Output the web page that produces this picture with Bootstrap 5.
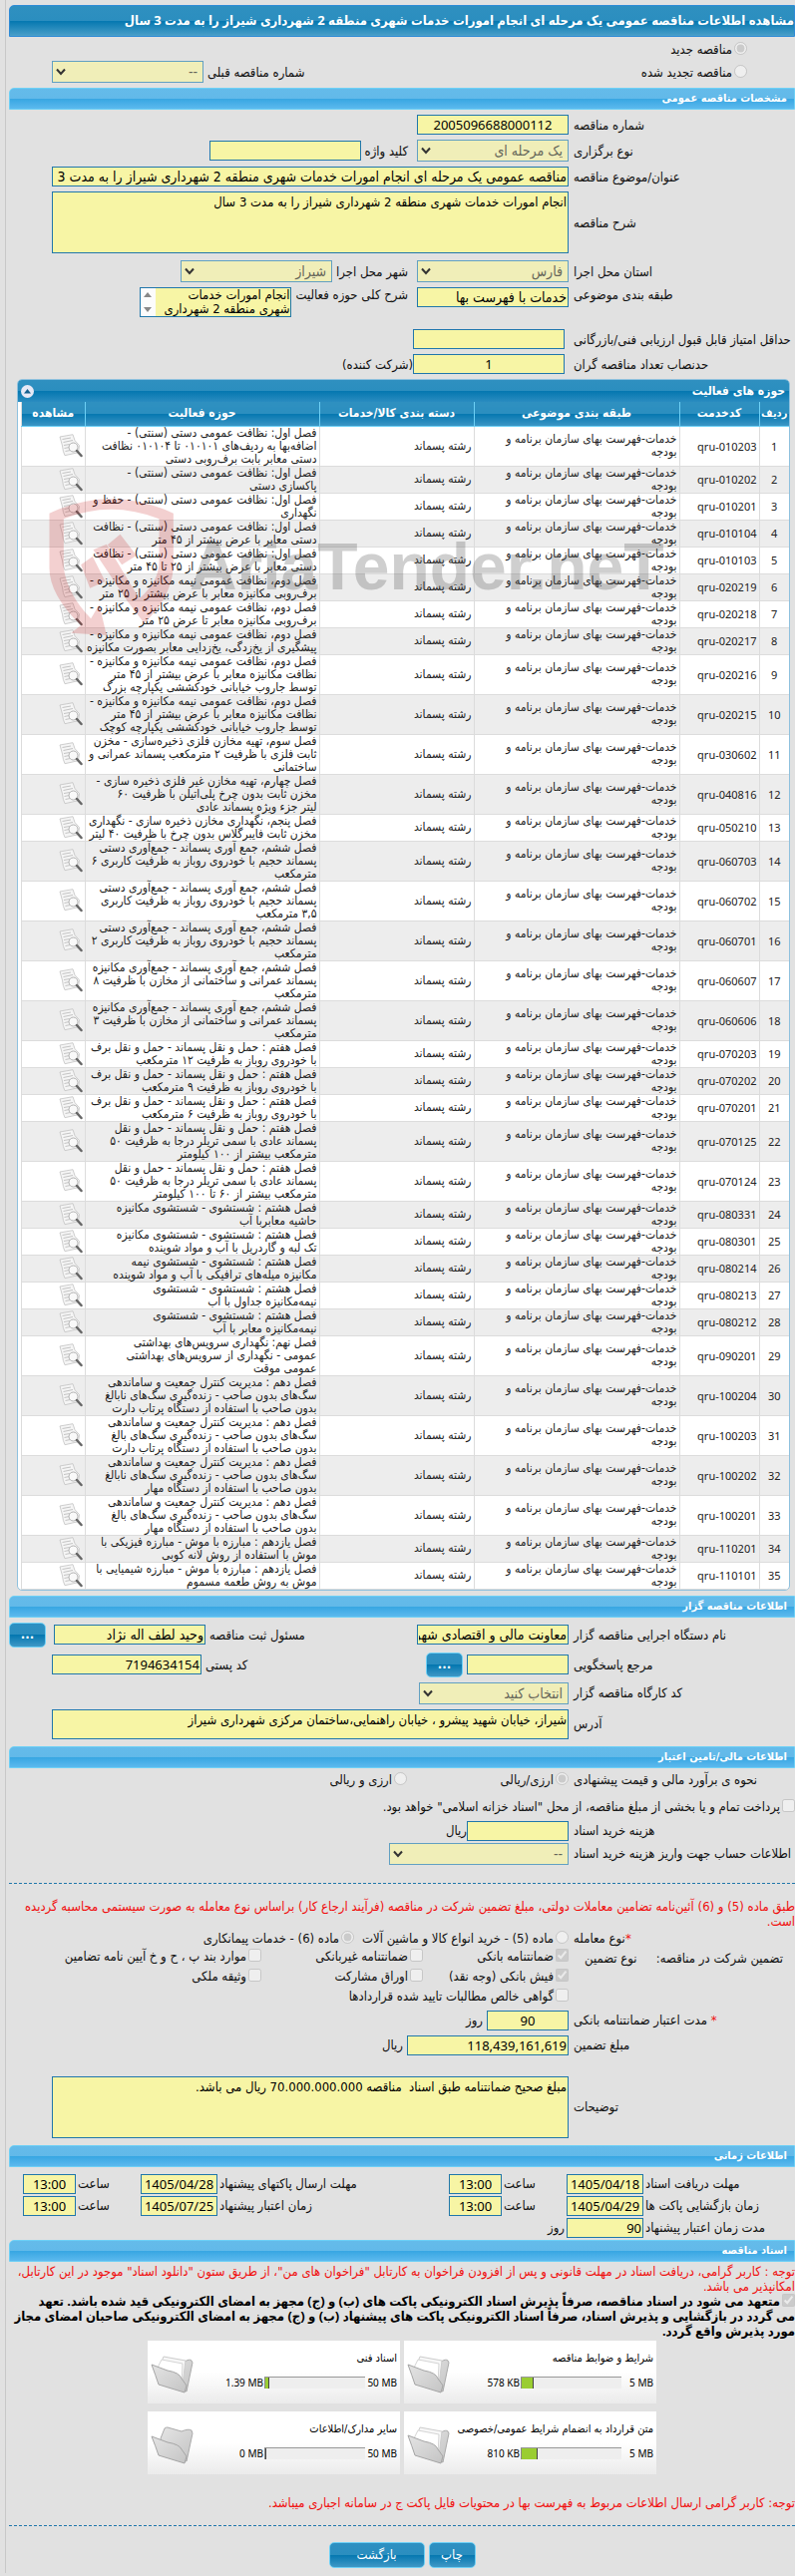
<!DOCTYPE html>
<html lang="fa" dir="rtl">
<head>
<meta charset="utf-8">
<meta name="viewport" content="width=device-width, initial-scale=1">
<title>مشاهده اطلاعات مناقصه عمومی</title>
<link href="https://cdn.jsdelivr.net/npm/bootstrap@5.3.0/dist/css/bootstrap.min.css" rel="stylesheet">
<style>
body{background:#e1e1e1;color:#111;font:13px/15px "DejaVu Sans Condensed","DejaVu Sans",sans-serif;overflow-x:hidden}
.page-frame{margin-left:5px;border-left:1px solid #c8c8c8;padding:5px 0 5px 3px}
.s2{margin-top:2px}.s5{margin-top:5px}.s7{margin-top:7px}.s12{margin-top:12px}.s15{margin-top:15px}.s18{margin-top:18px}.s21{margin-top:21px}
.title-bar{height:32px;border:1px solid #2e8bd6;border-radius:5px 0 0 0;color:#fff;font-family:"Noto Sans","DejaVu Sans Condensed","DejaVu Sans",sans-serif;font-size:13px;font-weight:700;white-space:nowrap;
 background:linear-gradient(#2f90c0 0,#2b8ebf 50%,#0477b0 50%,#4a9fc9 100%)}
.section-bar{height:22px;border:1px solid #6dd0f6;border-radius:5px 0 0 0;color:#fff;font-size:11px;font-weight:700;padding-right:7px;margin-bottom:0;
 background:linear-gradient(#64bbea 0,#62b9e9 50%,#37a6e2 50%,#5cb9ee 100%)}
.lab{flex:0 0 227px;padding-left:5px;text-align:left;white-space:nowrap}
.lab2{padding-left:4px;padding-right:9px;text-align:left;white-space:nowrap}
.h22{min-height:22px}.h20{min-height:20px}.h24{min-height:24px}.h26{min-height:25px}
.fld{display:block;height:20px;border:1px solid #2077ab;border-radius:0;background:#f7f5a5;color:#000;font-size:14px;line-height:18px;padding:0 1px;min-width:0;outline:0}
.digits{font-family:"Noto Sans","DejaVu Sans Condensed",sans-serif;font-size:13px}
textarea.fld{font-size:13px;line-height:15px;padding:2px 1px 0;resize:none;overflow:hidden}
select.fld{height:22px;appearance:none;background:#f0eeb8 url("data:image/svg+xml,%3Csvg xmlns='http://www.w3.org/2000/svg' width='10' height='8'%3E%3Cpath d='M1 1.5l4 4.5 4-4.5' fill='none' stroke='%23333' stroke-width='2'/%3E%3C/svg%3E") no-repeat 3px 6px;border-color:#62a0c2;color:#66665a;padding:0 5px 0 16px;opacity:1}
.w152{width:152px}.w150{width:150px}.w180{width:180px}.w102{width:102px}.w82{width:82px}.w162{width:162px}
.wide{flex:1 1 0}
.pl43{padding-left:43px}
input[type=radio],input[type=checkbox]{width:13px;height:13px;margin:0 0 0 2px;flex:none;vertical-align:-1px}
.btn-blue{border:1px solid #6dd0f6;border-radius:5px;color:#fff;font-size:13px;line-height:14px;padding:0;height:26px;
 background:linear-gradient(#2d90c2 0,#2b8ebf 50%,#0477b0 50%,#3f98c6 100%)}
.btn-blue:hover{color:#fff}
.btn-dots{width:37px;font-weight:700;height:25px}
.warn{color:#f01010}
.dash{border-top:1px dashed #2077ab}
.grid-panel{margin:5px 5px 0 8px;border:1px solid #8fc1de;border-radius:5px;background:#fff;padding-left:3px;overflow:hidden;color:#222}
.grid-head{height:22px;margin-left:-3px;padding:0 4px 0 3px;color:#fff;font-size:12px;font-weight:700;
 background:linear-gradient(#2f90c0 0,#2b8ebf 50%,#0477b0 50%,#2a8cc0 100%)}
.round-btn{width:13px;height:13px;border:0;border-radius:50%;background:#e6e9f6;padding:0;display:flex;align-items:center;justify-content:center}
.grid-table{table-layout:fixed;width:100%;border-collapse:collapse;font-size:12px;line-height:13px}
.grid-table th{height:24px;padding:0;text-align:center;color:#fff;font-size:12px;border-left:1px solid #6dd0f6;border-bottom:1px solid #6dd0f6;white-space:nowrap;
 background:linear-gradient(#2f90c0 0,#2b8ebf 50%,#0477b0 50%,#3b96c5 100%)}
.grid-table th:first-child{font-size:11px}
.grid-table th:last-child,.grid-table td:last-child{border-left:1px solid #dcdcdc}
.grid-table td{padding:0 2px;border-left:1px solid #dcdcdc;border-bottom:1px solid #dcdcdc;vertical-align:middle;white-space:nowrap}
.grid-table td.code{font-family:"Noto Sans","DejaVu Sans Condensed",sans-serif;font-size:11px}
.grid-table tr:nth-child(even) td{background:#ededed}
.grid-table tr.l2{height:27px}.grid-table tr.l3{height:40px}
.grid-table svg{display:block}
.stamp{position:absolute;left:4%;top:118px;width:82%;pointer-events:none}
.stamp-name{font:700 66px/80px "Liberation Sans Narrow","Liberation Sans",sans-serif;color:#555;opacity:.28}
.checks{display:grid;grid-template-columns:146px 162px 1fr;flex:1}
.kind{display:flex;justify-content:space-between;padding:0 12px 0 11px}
.dates{display:grid;grid-template-columns:150px 77px 61px 53px 1fr 77px 61px 53px;column-gap:2px;row-gap:2px;padding-left:14px;align-items:center}
.dates label{text-align:left;white-space:nowrap}
.dates .fld{width:100%}
.agree{font-family:"Noto Sans","DejaVu Sans Condensed","DejaVu Sans",sans-serif;font-size:13px;font-weight:700;color:#000}
.docs{display:grid;grid-template-columns:253px 253px;justify-content:center;gap:8px 4px;font-size:11px;line-height:13px;color:#000}
.doc{height:63px;background:linear-gradient(#fff 50%,#ebebeb);padding:11px 3px 0 3px;display:flex}
.doc bdi{font-family:"Noto Sans",sans-serif;font-size:10px;white-space:nowrap}
.meter{width:101px;height:12px;background:#eee;border-top:1px solid #999;direction:ltr;margin:0 1px;flex:none}
.meter span{display:block;height:11px;background:#9acd32;border-right:1px solid #444;border-left:1px solid #888}
.quota{width:31px;flex:none}
</style>
<script src="https://cdn.jsdelivr.net/npm/bootstrap@5.3.0/dist/js/bootstrap.bundle.min.js"></script>
</head>
<body>
<svg width="0" height="0" class="position-absolute">
 <defs>
  <linearGradient id="fold" x1="0" y1="0" x2="1" y2="1"><stop offset="0" stop-color="#e4e4e4"/><stop offset="1" stop-color="#c4c4c4"/></linearGradient>
  <symbol id="ico-view" viewBox="0 0 24 24">
   <path d="M1 3 14 .7l2 6 4.500 5-1 7-13.500 3Q4 18 3.500 12Z" fill="#f5f5f5" stroke="#c2c2c2" stroke-width=".8"/>
   <path d="M3.500 5.500 12 4M4.500 8.500 14 6.500M5 11.500l6-1M5.500 14.500l5-1M6.500 17.500l5-1" stroke="#bdbdbd" stroke-width=".9"/>
   <circle cx="14.500" cy="13.500" r="4.500" fill="#fafafa" fill-opacity=".8" stroke="#b2b2b2"/>
   <path d="m18 17 4.500 5" stroke="#666" stroke-width="2.500" stroke-linecap="round"/>
  </symbol>
  <symbol id="ico-folder" viewBox="0 0 43 38">
   <path d="M10 12 14 2q1-1 3-1l14 4q7-3 10-1l1 3-6 28-22-8Z" fill="url(#fold)" stroke="#aaa"/>
   <path d="M1 10 17 16q12 2 14 7l5 7-2 7L8 29Q5 20 1 10Z" fill="url(#fold)" stroke="#a5a5a5"/>
  </symbol>
  <symbol id="ico-folder-full" viewBox="0 0 43 38">
   <path d="M10 12 14 4l20 2q5-3 7-1l1 2-6 29-22-9Z" fill="url(#fold)" stroke="#aaa"/>
   <path d="M9 11 13 1l22 4-3 24-20-7Z" fill="#f7f7f7" stroke="#ccc"/>
   <path d="M7 12 11 4l21 4-1 21-20-7Z" fill="#fff" stroke="#d5d5d5"/>
   <path d="M1 9 17 15q12 2 14 8l5 7-2 7L8 29Q5 20 1 9Z" fill="url(#fold)" stroke="#a5a5a5"/>
  </symbol>
 </defs>
</svg>

<div class="page-frame">
 <h1 class="title-bar d-flex align-items-center mb-0">مشاهده اطلاعات مناقصه عمومی یک مرحله ای انجام امورات خدمات شهری منطقه 2 شهرداری شیراز را به مدت 3 سال</h1>
 <div class="d-flex align-items-center h24 pe-5 ps-5"><label><input type="radio" name="new" checked disabled>مناقصه جدید</label></div>
 <div class="d-flex align-items-center h22 pe-5 pl43"><label><input type="radio" name="new" disabled>مناقصه تجدید شده</label>
  <label class="lab2 wide" for="prev">شماره مناقصه قبلی</label><select id="prev" class="fld w152" disabled><option>--</option></select></div>

 <h2 class="section-bar d-flex align-items-center s5">مشخصات مناقصه عمومی</h2>
 <div class="d-flex align-items-center s5"><label class="lab" for="num">شماره مناقصه</label><input id="num" class="fld digits w152 text-center" value="2005096688000112" readonly></div>
 <div class="d-flex align-items-center s5"><label class="lab" for="typ">نوع برگزاری</label><select id="typ" class="fld w152" disabled><option>یک مرحله ای</option></select>
  <label class="lab2" for="kw">کلید واژه</label><input id="kw" class="fld w152" readonly></div>
 <div class="d-flex align-items-center s5 pl43"><label class="lab" for="ttl">عنوان/موضوع مناقصه</label><input id="ttl" class="fld wide" value="مناقصه عمومی یک مرحله ای انجام امورات خدمات شهری منطقه 2 شهرداری شیراز را به مدت 3 سال" readonly></div>
 <div class="d-flex align-items-center s5 pl43"><label class="lab" for="dsc">شرح مناقصه</label><textarea id="dsc" class="fld wide" style="height:62px" readonly>انجام امورات خدمات شهری منطقه 2 شهرداری شیراز را به مدت 3 سال</textarea></div>
 <div class="d-flex align-items-center s7"><label class="lab" for="prov">استان محل اجرا</label><select id="prov" class="fld w152" disabled><option>فارس</option></select>
  <label class="lab2" for="city">شهر محل اجرا</label><select id="city" class="fld w152" disabled><option>شیراز</option></select></div>
 <div class="d-flex align-items-start s5"><label class="lab" for="cls">طبقه بندی موضوعی</label><input id="cls" class="fld w152" value="خدمات با فهرست بها" readonly>
  <label class="lab2" for="area">شرح کلی حوزه فعالیت</label>
  <div class="position-relative"><textarea id="area" class="fld w152 text-nowrap" style="height:30px;line-height:14px;padding:0 1px" readonly>انجام امورات خدمات
شهری منطقه 2 شهرداری</textarea>
   <svg class="position-absolute" style="left:1px;top:1px" width="15" height="28"><path d="M0 0h15v28H0z" fill="#fcfcfc"/><path d="m3 9 4-5 4 5zM3 19l4 5 4-5z" fill="#888"/></svg></div></div>
 <div class="d-flex align-items-center s12"><label class="lab" for="minp">حداقل امتیاز قابل قبول ارزیابی فنی/بازرگانی</label><span class="ps-1"></span><input id="minp" class="fld w152" readonly></div>
 <div class="d-flex align-items-center s5"><label class="lab" for="quo">حدنصاب تعداد مناقصه گران</label><span class="ps-1"></span><input id="quo" class="fld digits w152 text-center" value="1" readonly><span>(شرکت کننده)</span></div>

 <section class="grid-panel position-relative">
  <div class="grid-head d-flex align-items-center justify-content-between"><span>حوزه های فعالیت</span><button class="round-btn" aria-label="بستن"><svg width="7" height="5"><path d="M0 4.500 3.500 0 7 4.500z" fill="#15608f"/></svg></button></div>
  <table class="grid-table"><colgroup><col style="width:30px"><col style="width:80px"><col style="width:206px"><col style="width:155px"><col style="width:235px"><col></colgroup>
   <thead><tr><th>ردیف</th><th>کدخدمت</th><th>طبقه بندی موضوعی</th><th>دسته بندی کالا/خدمات</th><th>حوزه فعالیت</th><th>مشاهده</th></tr></thead>
   <tbody id="rows"></tbody></table>
  <div class="stamp d-flex align-items-center" dir="ltr">
   <svg width="125" height="138" viewBox="89 388 374 414" class="flex-shrink-0"><g fill="#c00000" opacity=".18"><path d="M90 435Q275 348 463 435V600Q455 690 375 765L325 700 222 545 262 528 360 692Q420 640 420 580V452Q275 395 133 452V600Q145 680 215 752L240 710 262 802 155 795 185 772Q90 680 90 600Z"/><path d="m303 498 49 64-44 28-43-60zM185 590l35-25 38 75-46 20z"/></g></svg>
   <span class="stamp-name ms-3">AriaTender.neT</span>
  </div>
 </section>

 <h2 class="section-bar d-flex align-items-center s5">اطلاعات مناقصه گزار</h2>
 <div class="d-flex align-items-center s5 h26"><label class="lab" for="org">نام دستگاه اجرایی مناقصه گزار</label><input id="org" class="fld w152" value="معاونت مالی و اقتصادی شهرداری" readonly>
  <label class="lab2 wide" for="usr">مسئول ثبت مناقصه</label><input id="usr" class="fld w152" value="وحید لطف اله نژاد" readonly><span class="ps-1"></span><button class="btn btn-blue btn-dots ms-0 me-1">...</button></div>
 <div class="d-flex align-items-center s5 h26 pl43"><label class="lab" for="ref">مرجع پاسخگویی</label><input id="ref" class="fld w102" readonly><button class="btn btn-blue btn-dots me-1">...</button>
  <label class="lab2 wide" for="zip">کد پستی</label><input id="zip" class="fld digits w150" value="7194634154" readonly></div>
 <div class="d-flex align-items-center s5"><label class="lab" for="wrk">کد کارگاه مناقصه گزار</label><select id="wrk" class="fld w150" disabled><option>انتخاب کنید</option></select></div>
 <div class="d-flex align-items-center s5 pl43"><label class="lab" for="adr">آدرس</label><textarea id="adr" class="fld wide" style="height:30px" readonly>شیراز، خیابان شهید پیشرو ، خیابان راهنمایی،ساختمان مرکزی شهرداری شیراز</textarea></div>

 <h2 class="section-bar d-flex align-items-center s7">اطلاعات مالی/تامین اعتبار</h2>
 <div class="d-flex align-items-center h24"><span class="lab">نحوه ی برآورد مالی و قیمت پیشنهادی</span><label class="w162"><input type="radio" name="cur" checked disabled>ارزی/ریالی</label><label><input type="radio" name="cur" disabled>ارزی و ریالی</label></div>
 <div class="d-flex align-items-center h26 s2"><label><input type="checkbox" disabled>پرداخت تمام و یا بخشی از مبلغ مناقصه، از محل "اسناد خزانه اسلامی" خواهد بود.</label></div>
 <div class="d-flex align-items-center s2"><label class="lab" for="cost">هزینه خرید اسناد</label><input id="cost" class="fld w102" readonly><span>ریال</span></div>
 <div class="d-flex align-items-center s2"><label class="lab" for="acc">اطلاعات حساب جهت واریز هزینه خرید اسناد</label><select id="acc" class="fld w180" disabled><option>--</option></select></div>
 <div class="dash s18"></div>
 <p class="warn mb-0 s15">طبق ماده (5) و (6) آئین‌نامه تضامین معاملات دولتی، مبلغ تضمین شرکت در مناقصه (فرآیند ارجاع کار) براساس نوع معامله به صورت سیستمی محاسبه گردیده<br>است.</p>
 <div class="d-flex align-items-center h20"><span class="lab"><span class="warn">*</span>نوع معامله</span><label><input type="radio" name="mad" disabled>ماده (5) - خرید انواع کالا و ماشین آلات</label><label class="pe-2"><input type="radio" name="mad" checked disabled>ماده (6) - خدمات پیمانکاری</label></div>
 <div class="d-flex"><div class="lab"><div class="kind h20 align-items-center"><span>تضمین شرکت در مناقصه:</span><span>نوع تضمین</span></div></div>
  <div class="checks">
   <label class="h20"><input type="checkbox" checked disabled>ضمانتنامه بانکی</label><label><input type="checkbox" disabled>ضمانتنامه غیربانکی</label><label><input type="checkbox" disabled>موارد بند پ ، ح و خ آیین نامه تضامین</label>
   <label class="h20"><input type="checkbox" checked disabled>فیش بانکی (وجه نقد)</label><label><input type="checkbox" disabled>اوراق مشارکت</label><label><input type="checkbox" disabled>وثیقه ملکی</label>
   <label class="h20 text-nowrap"><input type="checkbox" disabled>گواهی خالص مطالبات تایید شده قراردادها</label>
  </div></div>
 <div class="d-flex align-items-center s2"><label class="lab" for="val"><span class="warn">*</span> مدت اعتبار ضمانتنامه بانکی</label><input id="val" class="fld digits w82 text-center" value="90" readonly><span class="pe-1">روز</span></div>
 <div class="d-flex align-items-center s5"><label class="lab" for="amt">مبلغ تضمین</label><input id="amt" class="fld digits w162" value="118,439,161,619" readonly><span class="pe-1">ریال</span></div>
 <div class="d-flex align-items-center s21 pl43"><label class="lab" for="nts">توضیحات</label><textarea id="nts" class="fld wide" style="height:62px" readonly>مبلغ صحیح ضمانتنامه طبق اسناد  مناقصه 70.000.000.000 ریال می باشد.</textarea></div>

 <h2 class="section-bar d-flex align-items-center s7">اطلاعات زمانی</h2>
 <div class="dates s7">
  <label for="d1">مهلت دریافت اسناد</label><input id="d1" class="fld digits text-center" value="1405/04/18" readonly><label for="t1">ساعت</label><input id="t1" class="fld digits text-center" value="13:00" readonly>
  <label for="d2">مهلت ارسال پاکتهای پیشنهاد</label><input id="d2" class="fld digits text-center" value="1405/04/28" readonly><label for="t2">ساعت</label><input id="t2" class="fld digits text-center" value="13:00" readonly>
  <label for="d3">زمان بازگشایی پاکت ها</label><input id="d3" class="fld digits text-center" value="1405/04/29" readonly><label for="t3">ساعت</label><input id="t3" class="fld digits text-center" value="13:00" readonly>
  <label for="d4">زمان اعتبار پیشنهاد</label><input id="d4" class="fld digits text-center" value="1405/07/25" readonly><label for="t4">ساعت</label><input id="t4" class="fld digits text-center" value="13:00" readonly>
  <label for="d5">مدت زمان اعتبار پیشنهاد</label><input id="d5" class="fld digits" value="90" readonly><span>روز</span>
 </div>

 <h2 class="section-bar d-flex align-items-center s2">اسناد مناقصه</h2>
 <p class="warn mb-0 s2">توجه : کاربر گرامی، دریافت اسناد در مهلت قانونی و پس از افزودن فراخوان به کارتابل "فراخوان های من"، از طریق ستون "دانلود اسناد" موجود در این کارتابل،<br>امکانپذیر می باشد.</p>
 <label class="agree d-block"><input type="checkbox" checked disabled>متعهد می شود در اسناد مناقصه، صرفاً پذیرش اسناد الکترونیکی پاکت های (ب) و (ج) مجهز به امضای الکترونیکی قید شده باشد. تعهد<br>می گردد در بازگشایی و پذیرش اسناد، صرفاً اسناد الکترونیکی پاکت های پیشنهاد (ب) و (ج) مجهز به امضای الکترونیکی صاحبان امضای مجاز مورد پذیرش واقع گردد.</label>
 <div class="docs s2" id="docs"></div>
 <p class="warn mb-0 s21">توجه: کاربر گرامی ارسال اطلاعات مربوط به فهرست بها در محتویات فایل پاکت ج در سامانه اجباری میباشد.</p>
 <div class="dash s15"></div>
 <div class="d-flex justify-content-center s12 gap-1 pt-1"><button class="btn btn-blue" style="width:47px">چاپ</button><button class="btn btn-blue" style="width:96px">بازگشت</button></div>
</div>

<script>
// code, then the activity text; "|" starts a new line in the cell
const rows = [
["010203","فصل اول: نظافت عمومی دستی (سنتی) -|اضافه‌بها به ردیف‌های ۰۱۰۱۰۱ تا ۰۱۰۱۰۴ نظافت|دستی معابر بابت برف‌روبی دستی"],
["010202","فصل اول: نظافت عمومی دستی (سنتی) -|پاکسازی دستی"],
["010201","فصل اول: نظافت عمومی دستی (سنتی) - حفظ و|نگهداری"],
["010104","فصل اول: نظافت عمومی دستی (سنتی) - نظافت|دستی معابر با عرض بیشتر از ۴۵ متر"],
["010103","فصل اول: نظافت عمومی دستی (سنتی) - نظافت|دستی معابر با عرض بیشتر از ۲۵ تا ۴۵ متر"],
["020219","فصل دوم، نظافت عمومی نیمه مکانیزه و مکانیزه -|برف‌روبی مکانیزه معابر با عرض بیشتر از ۲۵ متر"],
["020218","فصل دوم، نظافت عمومی نیمه مکانیزه و مکانیزه -|برف‌روبی مکانیزه معابر تا عرض ۲۵ متر"],
["020217","فصل دوم، نظافت عمومی نیمه مکانیزه و مکانیزه -|پیشگیری از یخ‌زدگی، یخ‌زدایی معابر بصورت مکانیزه"],
["020216","فصل دوم، نظافت عمومی نیمه مکانیزه و مکانیزه -|نظافت مکانیزه معابر با عرض بیشتر از ۴۵ متر|توسط جاروب خیابانی خودکششی یکپارچه بزرگ"],
["020215","فصل دوم، نظافت عمومی نیمه مکانیزه و مکانیزه -|نظافت مکانیزه معابر با عرض بیشتر از ۴۵ متر|توسط جاروب خیابانی خودکششی یکپارچه کوچک"],
["030602","فصل سوم، تهیه مخازن فلزی ذخیره‌سازی - مخزن|ثابت فلزی با ظرفیت ۲ مترمکعب پسماند عمرانی و|ساختمانی"],
["040816","فصل چهارم، تهیه مخازن غیر فلزی ذخیره سازی -|مخزن ثابت بدون چرخ پلی‌اتیلن با ظرفیت ۶۰|لیتر جزء ویژه پسماند عادی"],
["050210","فصل پنجم، نگهداری مخازن ذخیره سازی - نگهداری|مخزن ثابت فایبرگلاس بدون چرخ با ظرفیت ۴۰ لیتر"],
["060703","فصل ششم، جمع آوری پسماند - جمع‌آوری دستی|پسماند حجیم با خودروی روباز به ظرفیت کاربری ۶|مترمکعب"],
["060702","فصل ششم، جمع آوری پسماند - جمع‌آوری دستی|پسماند حجیم با خودروی روباز به ظرفیت کاربری|۳,۵ مترمکعب"],
["060701","فصل ششم، جمع آوری پسماند - جمع‌آوری دستی|پسماند حجیم با خودروی روباز به ظرفیت کاربری ۲|مترمکعب"],
["060607","فصل ششم، جمع آوری پسماند - جمع‌آوری مکانیزه|پسماند عمرانی و ساختمانی از مخازن با ظرفیت ۸|مترمکعب"],
["060606","فصل ششم، جمع آوری پسماند - جمع‌آوری مکانیزه|پسماند عمرانی و ساختمانی از مخازن با ظرفیت ۳|مترمکعب"],
["070203","فصل هفتم : حمل و نقل پسماند - حمل و نقل برف|با خودروی روباز به ظرفیت ۱۲ مترمکعب"],
["070202","فصل هفتم : حمل و نقل پسماند - حمل و نقل برف|با خودروی روباز به ظرفیت ۹ مترمکعب"],
["070201","فصل هفتم : حمل و نقل پسماند - حمل و نقل برف|با خودروی روباز به ظرفیت ۶ مترمکعب"],
["070125","فصل هفتم : حمل و نقل پسماند - حمل و نقل|پسماند عادی با سمی تریلر درجا به ظرفیت ۵۰|مترمکعب بیشتر از ۱۰۰ کیلومتر"],
["070124","فصل هفتم : حمل و نقل پسماند - حمل و نقل|پسماند عادی با سمی تریلر درجا به ظرفیت ۵۰|مترمکعب بیشتر از ۶۰ تا ۱۰۰ کیلومتر"],
["080331","فصل هشتم : شستشوی - شستشوی مکانیزه|حاشیه معابربا آب"],
["080301","فصل هشتم : شستشوی - شستشوی مکانیزه|تک لبه و گاردریل با آب و مواد شوینده"],
["080214","فصل هشتم : شستشوی - شستشوی نیمه|مکانیزه میله‌های ترافیکی با آب و مواد شوینده"],
["080213","فصل هشتم : شستشوی - شستشوی|نیمه‌مکانیزه جداول با آب"],
["080212","فصل هشتم : شستشوی - شستشوی|نیمه‌مکانیزه معابر با آب"],
["090201","فصل نهم: نگهداری سرویس‌های بهداشتی|عمومی - نگهداری از سرویس‌های بهداشتی|عمومی موقت"],
["100204","فصل دهم : مدیریت کنترل جمعیت و ساماندهی|سگ‌های بدون صاحب - زنده‌گیری سگ‌های نابالغ|بدون صاحب با استفاده از دستگاه پرتاب دارت"],
["100203","فصل دهم : مدیریت کنترل جمعیت و ساماندهی|سگ‌های بدون صاحب - زنده‌گیری سگ‌های بالغ|بدون صاحب با استفاده از دستگاه پرتاب دارت"],
["100202","فصل دهم : مدیریت کنترل جمعیت و ساماندهی|سگ‌های بدون صاحب - زنده‌گیری سگ‌های نابالغ|بدون صاحب با استفاده از دستگاه مهار"],
["100201","فصل دهم : مدیریت کنترل جمعیت و ساماندهی|سگ‌های بدون صاحب - زنده‌گیری سگ‌های بالغ|بدون صاحب با استفاده از دستگاه مهار"],
["110201","فصل یازدهم : مبارزه با موش - مبارزه فیزیکی با|موش با استفاده از روش لانه کوبی"],
["110101","فصل یازدهم : مبارزه با موش - مبارزه شیمیایی با|موش به روش طعمه مسموم"]];
document.getElementById("rows").innerHTML = rows.map(([code, text], i) => {
  const lines = text.split("|");
  return `<tr class="l${lines.length}"><td class="code text-center">${i + 1}</td><td class="code"><bdi>qru-${code}</bdi></td><td>خدمات-فهرست بهای سازمان برنامه و<br>بودجه</td><td>رشته پسماند</td><td>${lines.join("<br>")}</td><td><svg width="24" height="24"><use href="#ico-view"/></svg></td></tr>`;
}).join("");

const docs = [
["شرایط و ضوابط مناقصه","5 MB","578 KB",13,"ico-folder-full"],
["اسناد فنی","50 MB","1.39 MB",5,"ico-folder-full"],
["متن قرارداد به انضمام شرایط عمومی/خصوصی","5 MB","810 KB",17,"ico-folder-full"],
["سایر مدارک/اطلاعات","50 MB","0 MB",0,"ico-folder"]];
document.getElementById("docs").innerHTML = docs.map(([name, quota, used, pct, icon]) =>
  `<div class="doc"><div class="flex-grow-1"><div class="mb-2 pb-1 text-nowrap">${name}</div><div class="d-flex align-items-center"><span class="quota"><bdi>${quota}</bdi></span><div class="meter"><span style="width:${pct}%"></span></div><bdi dir="ltr">${used}</bdi></div></div><svg width="43" height="38" class="flex-shrink-0 mt-1"><use href="#${icon}"/></svg></div>`).join("");
</script>
</body>
</html>
